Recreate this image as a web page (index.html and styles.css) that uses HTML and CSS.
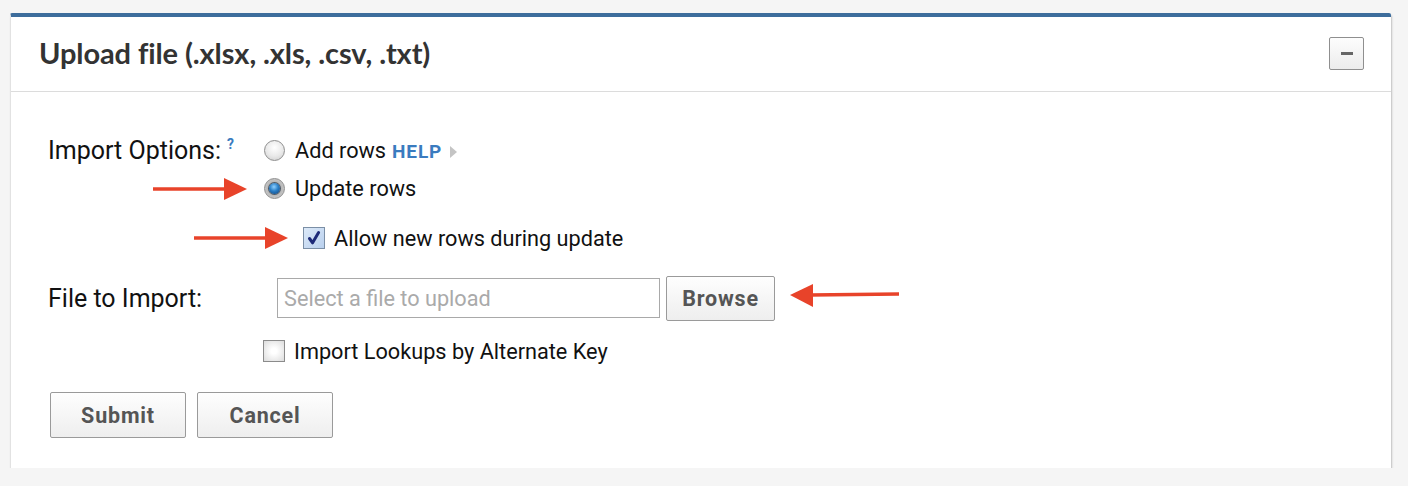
FILE: index.html
```html
<!DOCTYPE html>
<html>
<head>
<meta charset="utf-8">
<link rel="stylesheet" href="styles.css">
</head>
<body>
<div class="panel">
  <div class="panel-header">
    <h2 class="panel-title">Upload file (.xlsx, .xls, .csv, .txt)</h2>
    <button class="collapse-btn" aria-label="Collapse"><span class="minus"></span></button>
  </div>
  <div class="panel-body">
    <div class="opt-row">
      <div class="label-col">Import Options:<sup class="q">?</sup></div>
      <div class="radio-group">
        <label class="radio-item"><span class="radio"></span><span class="txt">Add rows</span><a class="help">HELP</a><span class="tri"></span></label>
        <label class="radio-item"><span class="radio checked"></span><span class="txt">Update rows</span></label>
        <label class="check-item indent"><span class="checkbox checked"><svg viewBox="0 0 20 20" width="20" height="20"><path d="M5.5 10.5 L8.6 14.8 L14.6 4.6" fill="none" stroke="#1d2a78" stroke-width="3" stroke-linecap="round" stroke-linejoin="round"/></svg></span><span class="txt">Allow new rows during update</span></label>
      </div>
    </div>
    <div class="file-row">
      <div class="label-col">File to Import:</div>
      <div class="file-input">Select a file to upload</div>
      <button class="btn browse">Browse</button>
    </div>
    <div class="lookup-row">
      <label class="check-item"><span class="checkbox"></span><span class="txt">Import Lookups by Alternate Key</span></label>
    </div>
    <div class="actions">
      <button class="btn action">Submit</button>
      <button class="btn action">Cancel</button>
    </div>

    <svg class="arrow a1" width="95" height="24" viewBox="0 0 95 24"><line x1="0" y1="12" x2="74" y2="12" stroke="#e8432a" stroke-width="3.5"/><polygon points="71,1 94,12 71,23" fill="#e8432a"/></svg>
    <svg class="arrow a2" width="95" height="24" viewBox="0 0 95 24"><line x1="0" y1="12" x2="74" y2="12" stroke="#e8432a" stroke-width="3.5"/><polygon points="71,1 94,12 71,23" fill="#e8432a"/></svg>
    <svg class="arrow a3" width="110" height="24" viewBox="0 0 110 24"><line x1="20" y1="11" x2="109" y2="10" stroke="#e8432a" stroke-width="3.5"/><polygon points="23,0 0,11 23,23" fill="#e8432a"/></svg>
  </div>
</div>
</body>
</html>
```
FILE: styles.css
```css
* { box-sizing: border-box; }
body {
  margin: 0;
  background: #f5f5f5;
  font-family: Roboto, "Liberation Sans", Arial, sans-serif;
  color: #111;
}
.panel {
  margin: 13px 0 0 10px;
  width: 1381px;
  background: #fff;
  border-top: 4px solid #3d6d9c;
  border-left: 1px solid #e2e2e2;
  border-radius: 2px 2px 0 0;
  box-shadow: 1px 2px 2px rgba(0,0,0,0.22);
}
.panel-header {
  height: 75px;
  border-bottom: 1px solid #dcdcdc;
  display: flex;
  align-items: center;
  justify-content: space-between;
  padding: 0 27px 0 28px;
}
.panel-title {
  margin: 0;
  font-family: Lato, "Open Sans", sans-serif;
  font-weight: 700;
  font-size: 29px;
  color: #333;
  letter-spacing: -0.1px;
  position: relative;
  top: -2px;
}
.collapse-btn {
  width: 35px;
  height: 33px;
  border: 1px solid #8f8f8f;
  border-radius: 2px;
  background: linear-gradient(#fdfdfd, #ececec);
  display: flex;
  align-items: center;
  justify-content: center;
  padding: 0;
  position: relative;
  top: -1px;
}
.minus {
  width: 12px;
  height: 3px;
  background: #666;
  display: block;
}
.panel-body {
  position: relative;
  padding: 39px 0 30px 37px;
}
.label-col {
  width: 216px;
  flex: none;
  font-size: 25px;
  color: #111;
}
.q {
  color: #3a7bbf;
  font-size: 14px;
  font-weight: 700;
  margin-left: 6px;
  position: relative;
  top: -6px;
}
.opt-row {
  display: flex;
}
.opt-row .label-col {
  height: 38px;
  display: flex;
  align-items: center;
}
.radio-group {
  display: flex;
  flex-direction: column;
}
.radio-item, .check-item {
  display: flex;
  align-items: center;
  height: 38px;
  font-size: 21.7px;
}
.check-item.indent {
  margin-top: 12px;
  margin-left: 39px;
}
.radio {
  width: 21px;
  height: 21px;
  border-radius: 50%;
  border: 1px solid #8e8e8e;
  background: radial-gradient(circle at 50% 35%, #ffffff 0%, #e9e9e9 55%, #c9c9c9 100%);
  margin-right: 10px;
  flex: none;
  position: relative;
}
.radio.checked {
  background: radial-gradient(circle at 50% 50%, #9a9a9a 0%, #d6d6d6 100%);
}
.radio.checked::after {
  content: "";
  position: absolute;
  left: 4px;
  top: 4px;
  width: 11px;
  height: 11px;
  border-radius: 50%;
  background: radial-gradient(circle at 45% 35%, #8fd0ff 0%, #2a7fc7 45%, #0d3f78 100%);
  box-shadow: 0 0 0 1px #4e5a66;
}
.help {
  color: #3a7bbf;
  font-weight: 700;
  font-size: 19px;
  letter-spacing: 0.9px;
  margin-left: 6px;
  position: relative;
  top: 1px;
}
.tri {
  width: 0;
  height: 0;
  border-top: 6px solid transparent;
  border-bottom: 6px solid transparent;
  border-left: 7px solid #c4c4c4;
  margin-left: 8px;
  position: relative;
  top: 2px;
}
.checkbox {
  width: 22px;
  height: 22px;
  border: 1px solid #8b8b8b;
  background: radial-gradient(circle, #ffffff 20%, #dcdcdc 100%);
  margin-right: 9px;
  flex: none;
  display: flex;
  align-items: center;
  justify-content: center;
}
.checkbox.checked {
  border-color: #7b8fa6;
  background: linear-gradient(135deg, #dce9f8, #b9d0ee);
}
.file-row {
  display: flex;
  align-items: center;
  height: 44px;
  margin-top: 19px;
}
.file-input {
  margin-left: 13px;
  width: 383px;
  height: 40px;
  border: 1px solid #a9a9a9;
  font-size: 21.7px;
  color: #aaa;
  padding-left: 6px;
  display: flex;
  align-items: center;
}
.btn {
  font-family: Roboto, "Liberation Sans", Arial, sans-serif;
  font-weight: 700;
  color: #555;
  font-size: 21.5px;
  letter-spacing: 0.8px;
  border: 1px solid #9a9a9a;
  border-radius: 2px;
  background: linear-gradient(#fefefe, #eeeeee);
  padding: 0;
}
.browse {
  margin-left: 6px;
  width: 109px;
  height: 45px;
}
.lookup-row {
  margin-top: 12px;
  margin-left: 215px;
}
.actions {
  display: flex;
  gap: 11px;
  margin-top: 22px;
  margin-left: 2px;
}
.action {
  width: 136px;
  height: 46px;
}
.arrow {
  position: absolute;
}
.a1 { left: 142px; top: 85px; }
.a2 { left: 183px; top: 134px; }
.a3 { left: 779px; top: 192px; }
```
